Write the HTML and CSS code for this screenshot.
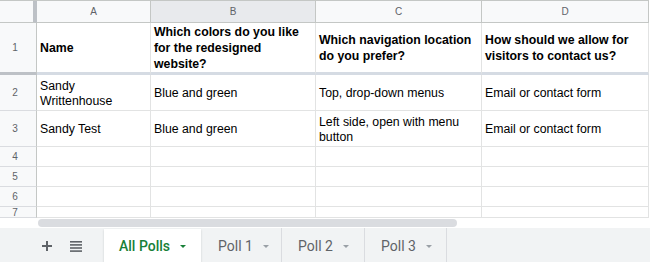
FILE: index.html
```html
<!DOCTYPE html>
<html>
<head>
<meta charset="utf-8">
<link rel="stylesheet" href="styles.css">
</head>
<body>
<div class="app">
  <div class="grid">
    <div class="corner"></div>
    <div class="ch">A</div>
    <div class="ch sel">B</div>
    <div class="ch">C</div>
    <div class="ch">D</div>

    <div class="rh frz">1</div>
    <div class="c b frz">Name</div>
    <div class="c b frz">Which colors do you like for the redesigned website?</div>
    <div class="c b frz">Which navigation location do you prefer?</div>
    <div class="c b frz">How should we allow for visitors to contact us?</div>

    <div class="rh">2</div>
    <div class="c">Sandy Writtenhouse</div>
    <div class="c">Blue and green</div>
    <div class="c">Top, drop-down menus</div>
    <div class="c">Email or contact form</div>

    <div class="rh">3</div>
    <div class="c">Sandy Test</div>
    <div class="c">Blue and green</div>
    <div class="c">Left side, open with menu button</div>
    <div class="c">Email or contact form</div>

    <div class="rh">4</div><div class="c"></div><div class="c"></div><div class="c"></div><div class="c"></div>
    <div class="rh">5</div><div class="c"></div><div class="c"></div><div class="c"></div><div class="c"></div>
    <div class="rh">6</div><div class="c"></div><div class="c"></div><div class="c"></div><div class="c"></div>
    <div class="rh cut">7</div><div class="c"></div><div class="c"></div><div class="c"></div><div class="c"></div>
  </div>
  <div class="hscroll">
    <div class="thumb"></div>
  </div>
  <div class="tabbar">
    <div class="tool plus">
      <svg width="12" height="12" viewBox="0 0 12 12"><path d="M6 1v10M1 6h10" stroke="#5f6368" stroke-width="2"/></svg>
    </div>
    <div class="tool list">
      <svg width="12" height="12" viewBox="0 0 12 12"><rect x="0" y="1" width="12" height="1.6" fill="#5f6368"/><rect x="0" y="4.1" width="12" height="1.6" fill="#5f6368"/><rect x="0" y="7.2" width="12" height="1.6" fill="#5f6368"/><rect x="0" y="10.3" width="12" height="1.6" fill="#5f6368"/></svg>
    </div>
    <div class="tab active"><span>All Polls</span><i class="caret"></i></div>
    <div class="tab t1"><span>Poll 1</span><i class="caret"></i></div>
    <div class="tab t2"><span>Poll 2</span><i class="caret"></i></div>
    <div class="tab t3"><span>Poll 3</span><i class="caret"></i></div>
  </div>
</div>
</body>
</html>
```
FILE: styles.css
```css
html, body {
  margin: 0;
  padding: 0;
  background: #fff;
}
.app {
  width: 650px;
  height: 262px;
  overflow: hidden;
  font-family: "Liberation Sans", Arial, sans-serif;
}
.grid {
  display: grid;
  grid-template-columns: 37px 114px 165px 166px 167px;
  grid-template-rows: 22px 52px 36px 36px 20px 20px 20px 11px;
  border-top: 1px solid #c4c7c5;
  width: 649px;
}
.grid > div {
  box-sizing: border-box;
  overflow: hidden;
}
.corner {
  background: #f8f9fa;
  border-right: 4px solid #bdc1c6;
  border-bottom: 1px solid #c4c7c5;
}
.ch {
  background: #f8f9fa;
  border-right: 1px solid #c4c7c5;
  border-bottom: 1px solid #c4c7c5;
  color: #5f6368;
  font-size: 10px;
  display: flex;
  align-items: center;
  justify-content: center;
}
.ch.sel {
  background: #e8eaed;
}
.rh {
  background: #f8f9fa;
  border-right: 1px solid #c4c7c5;
  border-bottom: 1px solid #dadce0;
  color: #5f6368;
  font-size: 10px;
  display: flex;
  align-items: center;
  justify-content: center;
  padding-right: 6px;
}
.rh.frz {
  border-bottom: 3px solid #bdc1c6;
}
.rh.cut {
  align-items: flex-start;
  padding-top: 1px;
  line-height: 10px;
}
.c {
  border-right: 1px solid #e2e3e3;
  border-bottom: 1px solid #e2e3e3;
  display: flex;
  align-items: center;
  padding: 2px 3px 0;
  font-size: 12.3px;
  line-height: 15px;
  color: #000;
}
.c.frz {
  border-bottom: 3px solid #d5dbe3;
  padding-top: 1px;
}
.c.b {
  font-weight: bold;
  line-height: 16px;
}
.hscroll {
  height: 10px;
  position: relative;
  background: #fff;
}
.thumb {
  position: absolute;
  left: 38px;
  top: 1px;
  width: 419px;
  height: 8px;
  border-radius: 4px;
  background: #dadce0;
}
.tabbar {
  height: 34px;
  background: #f1f3f4;
  display: flex;
  align-items: stretch;
  font-family: Roboto, "Liberation Sans", Arial, sans-serif;
  font-size: 14px;
  color: #5f6368;
}
.tool {
  display: flex;
  align-items: center;
  justify-content: center;
  padding-top: 2px;
}
.plus {
  margin-left: 41px;
  width: 12px;
}
.list {
  margin-left: 17px;
  width: 12px;
}
.tab {
  box-sizing: border-box;
  display: flex;
  align-items: center;
  gap: 10px;
  padding-left: 16px;
  padding-top: 2px;
  border-right: 1px solid #dadce0;
}
.tab.active {
  margin-left: 22px;
  margin-top: 1px;
  padding-top: 1px;
  width: 97px;
  padding-left: 15px;
  background: #fff;
  color: #188038;
  font-weight: 500;
  border-right: none;
  box-shadow: 0 1px 2px rgba(60, 64, 67, 0.2);
}
.tab.t1 {
  width: 81px;
  padding-left: 17px;
}
.tab.t2 {
  width: 83px;
}
.tab.t3 {
  width: 82px;
}
.caret {
  width: 0;
  height: 0;
  border-left: 3.5px solid transparent;
  border-right: 3.5px solid transparent;
  border-top: 3.5px solid #80868b;
}
.tab.active .caret {
  border-top-color: #188038;
}
.tab.t1 .caret, .tab.t2 .caret, .tab.t3 .caret {
  border-top-color: #9aa0a6;
}
```
